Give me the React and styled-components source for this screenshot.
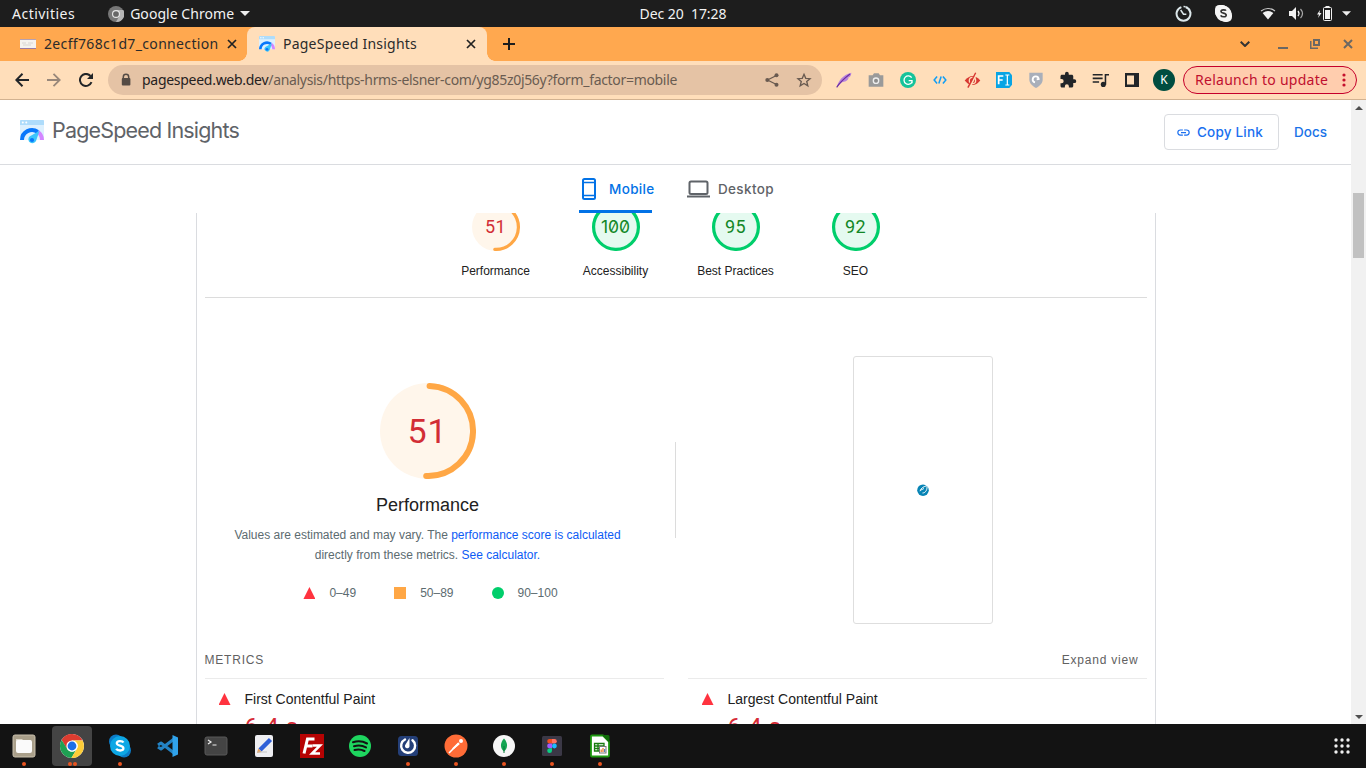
import React from "react";
import styled, { createGlobalStyle, css } from "styled-components";

const ui = '"Noto Sans", "Open Sans", sans-serif';
const product = 'Inter, "Liberation Sans", sans-serif';
const body = '"Liberation Sans", Arial, sans-serif';
const numeric = 'Roboto, "Liberation Sans", sans-serif';

const Global = createGlobalStyle`
  * { box-sizing: border-box; }
  html, body { margin: 0; padding: 0; overflow: hidden; background: #131313; }
  svg { display: block; flex: none; }
`;

const Screen = styled.div`
  width: 1366px;
  height: 768px;
  display: flex;
  flex-direction: column;
  overflow: hidden;
  font-family: ${ui};
`;

const Label = styled.span`
  white-space: pre;
  font-size: ${(p) => p.$size || 14}px;
  letter-spacing: ${(p) => p.$track || 0}px;
  color: ${(p) => p.$color || "inherit"};
`;

/* ---------- system bar ---------- */
const SystemBar = styled.header`
  height: 27px;
  flex: none;
  background: #1d1d1d;
  color: #f2f2f2;
  display: grid;
  grid-template-columns: 1fr auto 1fr;
  align-items: center;
  line-height: 26px;
`;
const SystemMenus = styled.div`
  display: flex;
  align-items: center;
  padding-left: 12px;
`;
const AppMenu = styled.div`
  display: flex;
  align-items: center;
  gap: 6px;
  margin-left: 33px;
`;
const Tray = styled.div`
  display: flex;
  align-items: center;
  justify-content: flex-end;
  padding-right: 15px;
`;
const TraySlot = styled.div`
  width: ${(p) => p.$w}px;
  margin-left: ${(p) => p.$before || 0}px;
  display: flex;
  justify-content: center;
`;

/* ---------- browser chrome ---------- */
const TabStrip = styled.div`
  height: 34px;
  flex: none;
  background: #ffa84f;
  display: flex;
  color: #2b2b2b;
`;
const Tab = styled.div`
  width: ${(p) => p.$w}px;
  display: flex;
  align-items: center;
  padding: 0 ${(p) => p.$right}px 0 ${(p) => p.$left}px;
  position: relative;
  ${(p) =>
    p.$active &&
    css`
      background: #ffdeba;
      border-radius: 8px 8px 0 0;
      &::before,
      &::after {
        content: "";
        position: absolute;
        bottom: 0;
        width: 8px;
        height: 8px;
      }
      &::before {
        left: -8px;
        background: radial-gradient(circle at 0 0, transparent 7.5px, #ffdeba 8px);
      }
      &::after {
        right: -8px;
        background: radial-gradient(circle at 100% 0, transparent 7.5px, #ffdeba 8px);
      }
    `}
`;
const TabTitle = styled(Label)`
  margin-left: 8px;
  flex: 1;
  line-height: 34px;
`;
const NewTab = styled.div`
  width: 44px;
  display: grid;
  place-items: center;
`;
const WindowControls = styled.div`
  margin-left: auto;
  display: flex;
  align-items: center;
  padding-right: 2px;
`;
const Toolbar = styled.div`
  height: 39px;
  flex: none;
  background: #ffdeba;
  border-bottom: 1px solid #d2b291;
  display: flex;
  align-items: center;
  padding: 0 9px 0 6px;
`;
const ToolCell = styled.div`
  width: 32px;
  height: 30px;
  display: grid;
  place-items: center;
`;
const AddressBar = styled.div`
  width: 714px;
  height: 30px;
  border-radius: 15px;
  background: #e5c3a5;
  margin: 0 6px 0 6px;
  padding: 0 2px 0 12px;
  display: flex;
  align-items: center;
`;
const Url = styled.div`
  flex: 1;
  margin-left: 10px;
  padding-bottom: 2px;
  line-height: 28px;
`;
const Avatar = styled.div`
  width: 22px;
  height: 22px;
  border-radius: 50%;
  background: #004d40;
  color: #fff;
  font: 12px/22px ${ui};
  text-align: center;
`;
const Relaunch = styled.div`
  width: 174px;
  height: 28px;
  margin-left: 3px;
  border: 1px solid #c5002b;
  border-radius: 14px;
  background: #ffcdae;
  color: #c00f2e;
  display: flex;
  align-items: center;
  justify-content: space-between;
  padding: 0 10px 0 11px;
  line-height: 26px;
`;

/* ---------- page ---------- */
const Viewport = styled.div`
  height: 624px;
  flex: none;
  display: flex;
  background: #fff;
`;
const Page = styled.main`
  width: 1351px;
  display: flex;
  flex-direction: column;
  overflow: hidden;
`;
const Scrollbar = styled.div`
  width: 15px;
  background: #f1f1f1;
  display: flex;
  flex-direction: column;
  align-items: center;
  padding: 6px 0 5px;
`;
const Thumb = styled.div`
  width: 11px;
  height: 65px;
  margin: 83px 0 auto;
  background: #c1c1c1;
`;
const Arrow = styled.div`
  border: 4px solid transparent;
  ${(p) => (p.$up ? "border-top: 0; border-bottom-color: #505050;" : "border-bottom: 0; border-top-color: #505050;")}
`;
const PageHeader = styled.div`
  height: 65px;
  flex: none;
  border-bottom: 1px solid #dadce0;
  display: flex;
  align-items: center;
  padding: 0 23px 0 20px;
  font-family: ${product};
`;
const Brand = styled.div`
  display: flex;
  align-items: center;
  gap: 8px;
  flex: 1;
  padding-bottom: 1px;
`;
const BrandName = styled(Label)`
  padding-bottom: 3px;
`;
const CopyButton = styled.div`
  width: 115px;
  height: 36px;
  border: 1px solid #dadce0;
  border-radius: 4px;
  display: flex;
  align-items: center;
  padding-left: 11px;
  gap: 6px;
  color: #1a6ff0;
  font-weight: 500;
`;
const DocsLink = styled.div`
  display: flex;
  margin-left: 15px;
  width: 34px;
  color: #1a73e8;
  font-weight: 500;
`;
const FormFactors = styled.nav`
  height: 48px;
  flex: none;
  display: flex;
  justify-content: center;
  gap: 34px;
  padding-left: 3px;
  font-family: ${product};
`;
const FormFactor = styled.div`
  width: ${(p) => p.$w}px;
  display: flex;
  align-items: center;
  gap: ${(p) => p.$gap}px;
  font-weight: 500;
  color: ${(p) => (p.$active ? "#0272e6" : "#5f6368")};
  border-bottom: 1px solid transparent;
  background: ${(p) => (p.$active ? "linear-gradient(#0272e6,#0272e6) 0 100%/73px 3px no-repeat border-box" : "none")};
`;
const Clip = styled.div`
  flex: 1;
  overflow: hidden;
`;
const Report = styled.div`
  width: 960px;
  height: 560px;
  margin: -10px auto 0;
  padding: 0 8px;
  border: 1px solid #dadce0;
  border-width: 0 1px;
  font-family: ${body};
  color: #212121;
`;
const ScoreRow = styled.div`
  height: 95px;
  display: flex;
  justify-content: center;
  border-bottom: 1px solid #dcdcdc;
`;
const ScoreItem = styled.div`
  width: 120px;
  display: flex;
  flex-direction: column;
  align-items: center;
  gap: 10px;
  font-size: 12px;
  line-height: 20px;
`;
const GaugeBox = styled.div`
  display: grid;
  width: ${(p) => p.$d}px;
  height: ${(p) => p.$d}px;
  > * { grid-area: 1 / 1; }
`;
const GaugeValue = styled.div`
  place-self: center;
  font-family: ${(p) => (p.$slashed ? product : numeric)};
  font-feature-settings: "zero" ${(p) => (p.$slashed ? 1 : 0)};
  font-size: ${(p) => p.$size}px;
  line-height: 1;
  letter-spacing: ${(p) => p.$track}px;
  color: ${(p) => p.$color};
`;
const Summary = styled.section`
  display: grid;
  grid-template-columns: 446px 1px 447px;
  column-gap: 24px;
  height: 352px;
`;
const Category = styled.div`
  display: flex;
  flex-direction: column;
  align-items: center;
  padding-top: 85px;
`;
const CategoryTitle = styled.h2`
  margin: 16px 0 10px;
  font-size: 18px;
  line-height: 20px;
  font-weight: 400;
`;
const Description = styled.p`
  margin: 0;
  width: 400px;
  text-align: center;
  font-size: 12px;
  line-height: 20px;
  color: #5c6b70;
  span { color: #0d5bf5; }
`;
const Legend = styled.div`
  margin-top: 18px;
  padding-left: 6px;
  display: flex;
  gap: 38px;
  font-size: 12px;
  line-height: 20px;
  color: #5c6b70;
`;
const LegendItem = styled.div`
  display: flex;
  align-items: center;
  gap: 14px;
`;
const Mark = styled.i`
  width: 12px;
  height: 12px;
  background: ${(p) => ({ fail: "#ff333f", average: "#ffa745", pass: "#00ce6b" })[p.$kind]};
  border-radius: ${(p) => (p.$kind === "pass" ? "50%" : 0)};
  clip-path: ${(p) => (p.$kind === "fail" ? "polygon(50% 0, 100% 100%, 0 100%)" : "none")};
`;
const Rule = styled.div`
  height: 96px;
  margin-top: 144px;
  background: #dcdcdc;
`;
const Thumbnail = styled.div`
  width: 140px;
  height: 268px;
  margin: 58px 0 0 153px;
  border: 1px solid #dedede;
  border-radius: 3px;
  display: grid;
  place-items: center;
`;
const MetricsHeader = styled.div`
  display: flex;
  justify-content: space-between;
  height: 28px;
  padding-right: 8px;
  font-size: 12px;
  line-height: 20px;
  letter-spacing: 0.8px;
  color: #616161;
`;
const MetricGrid = styled.div`
  display: grid;
  grid-template-columns: 459px 459px;
  column-gap: 24px;
`;
const Metric = styled.div`
  border-top: 1px solid #ebebeb;
  padding: 10px 0 0 14px;
  display: grid;
  grid-template-columns: 26px 1fr;
  align-items: center;
  font-size: 14px;
  line-height: 20px;
`;
const MetricValue = styled.div`
  grid-column: 2;
  font: 24px/36px ${numeric};
  letter-spacing: 0.5px;
  color: #d62a35;
`;

/* ---------- dock ---------- */
const Dock = styled.footer`
  height: 44px;
  flex: none;
  background: #131313;
  display: flex;
  align-items: center;
  padding-right: 16px;
`;
const DockItem = styled.div`
  width: 40px;
  height: 40px;
  margin: 0 4px;
  border-radius: 4px;
  background: ${(p) => (p.$active ? "#444" : "transparent")};
  display: flex;
  flex-direction: column;
  align-items: center;
  padding-top: 8px;
`;
const Dots = styled.div`
  display: flex;
  gap: 1px;
  margin-top: 4px;
  i {
    width: 4px;
    height: 4px;
    border-radius: 50%;
    background: #e95420;
  }
`;
const DockSpacer = styled.div`
  flex: 1;
`;

const Icon = ({ s = 16, w, h, box = 24, children, ...rest }) => (
  <svg width={w || s} height={h || s} viewBox={typeof box === "string" ? box : `0 0 ${box} ${box}`} fill="none" {...rest}>
    {children}
  </svg>
);

const Cross = ({ color = "#222", s = 10, sw = 1.7 }) => (
  <Icon s={s} box={10} stroke={color} strokeWidth={sw}><path d="M1 1l8 8M9 1l-8 8" /></Icon>
);

const SpeedLogo = ({ s }) => (
  <Icon s={s} box={24}>
    <path d="M1 0h22a1 1 0 0 1 1 1v19H0V1a1 1 0 0 1 1-1z" fill="#dcf0fe" />
    <path d="M1 0h22a1 1 0 0 1 1 1v4H0V1a1 1 0 0 1 1-1z" fill="#aedcfb" />
    <circle cx="2.8" cy="2.6" r="1" fill="#fff" /><circle cx="6.3" cy="2.6" r="1" fill="#fff" />
    <path d="M2 20a10 10 0 0 1 15.8-8.1" stroke="#0877fb" strokeWidth="4" />
    <path d="M17.8 11.9A10 10 0 0 1 22 20" stroke="#d386ff" strokeWidth="4" />
    <path d="M19.5 10.8L16 21a4 4 0 1 1-6.5-4.5z" fill="#3cc5fb" />
    <circle cx="12" cy="20" r="2.1" fill="#0877fb" />
  </Icon>
);

function Gauge({ d, stroke, score, size, track, pass, slashed }) {
  const r = (d - stroke) / 2;
  const c = 2 * Math.PI * r;
  const part = score === 51 ? 0.5 : 1;
  return (
    <GaugeBox $d={d}>
      <svg width={d} height={d}>
        <circle cx={d / 2} cy={d / 2} r={d / 2} fill={pass ? "#e5faf0" : "#fff6eb"} />
        <circle
          cx={d / 2} cy={d / 2} r={r} fill="none" stroke={pass ? "#00ce6b" : "#ffa745"}
          strokeWidth={stroke} strokeLinecap="round" strokeDasharray={`${part * c} ${c}`}
          transform={`rotate(-88 ${d / 2} ${d / 2})`}
        />
      </svg>
      <GaugeValue $size={size} $track={track} $slashed={slashed} $color={pass ? "#128726" : "#d22d35"}>{score}</GaugeValue>
    </GaugeBox>
  );
}

const extensions = [
  <Icon s={16}><path d="M1 23C3 14 10 4 23 1c0 5-3 7-6 8l2 .5c-2 4-6 5.500-10 6z" fill="#b884dd" /><path d="M1 23C7 14 13 9 21 3" stroke="#6c2d9e" strokeWidth="1.600" /></Icon>,
  <Icon s={16}><path d="M1 5h6l2-3h7l2 3h5v17H1z" fill="#9a9a9a" /><circle cx="12" cy="13" r="5" fill="#eee" /><circle cx="12" cy="13" r="3" fill="#8d8d8d" /></Icon>,
  <Icon s={16}><circle cx="12" cy="12" r="12" fill="#15c39a" /><path d="M17.5 8.5A6.3 6.3 0 1 0 18 15v-2h-5M18 12v5" stroke="#fff" strokeWidth="2" /></Icon>,
  <Icon s={14} stroke="#109df5" strokeWidth="2.600"><path d="M7 6l-5 6 5 6M17 6l5 6-5 6M14 6l-4 12" /></Icon>,
  <Icon s={17}><path d="M1 12Q12-1 23 12 12 25 1 12z" fill="#d73832" /><circle cx="12" cy="12" r="4.500" stroke="#ffdeba" strokeWidth="1.800" /><path d="M7.500 23L18.500 1" stroke="#ffdeba" strokeWidth="2.600" /><path d="M5.500 22L16.500 1" stroke="#d73832" strokeWidth="2" /></Icon>,
  <Icon s={16}><path d="M0 0h20l4 5v14l-4 5H0z" fill="#08a4e4" /><path d="M4 18.500V6h7M4 12h6" stroke="#fff" strokeWidth="2.600" /><path d="M14 4.500h6M14 19.500h6M17 4.500v15" stroke="#fff" strokeWidth="1.800" /></Icon>,
  <Icon s={16}><path d="M2 1h20v10c0 6-4 10-10 13C6 21 2 17 2 11z" fill="#a9afba" /><path d="M10.500 15.500a4.500 4.500 0 1 1 5.500-5l-3 .5" stroke="#fff" strokeWidth="2.800" /></Icon>,
  <Icon s={18}><path fill="#222528" d="M20.5 11H19V7c0-1.1-.9-2-2-2h-4V3.500a2.500 2.500 0 0 0-5 0V5H4c-1.100 0-2 .9-2 2v3.800h1.500a2.700 2.700 0 0 1 0 5.400H2V20c0 1.100.9 2 2 2h3.800v-1.500a2.700 2.700 0 0 1 5.400 0V22H17c1.100 0 2-.9 2-2v-4h1.500a2.500 2.500 0 0 0 0-5z" /></Icon>,
  <Icon s={17}><path d="M1 4h14M1 9h14M1 14h9M19 18V4h5" stroke="#222528" strokeWidth="2.2" /><circle cx="16" cy="17.500" r="3.600" fill="#222528" /></Icon>,
  <Icon s={14} box={14}><path d="M0 0h14v14H0zM2 2.500v9h7v-9z" fill="#222528" fillRule="evenodd" /></Icon>,
  <Avatar>K</Avatar>,
];

const dock = [
  { dots: 1, art: <><rect x="1" y="1" width="22" height="22" rx="2" fill="#a99f8a" stroke="#c9c0ac" /><path d="M4 7V5h6l1 1h8v3H4z" fill="#ded8ca" /><rect x="4" y="6" width="16" height="13" rx="2" fill="#fafafa" /></> },
  { dots: 2, active: true, art: <><circle cx="12" cy="12" r="12" fill="#fff" /><path d="M12 6.500h10.600A12 12 0 0 0 1.600 6L7 15z" fill="#dc3c30" /><path d="M1.600 6A12 12 0 0 0 11.400 24l5.500-9.300A5.500 5.500 0 0 1 7 14.500z" fill="#1fa053" /><path d="M11.400 24A12 12 0 0 0 22.600 6.500H12a5.500 5.500 0 0 1 4.800 8.500z" fill="#fdcd38" /><circle cx="12" cy="12" r="5.600" fill="#fff" /><circle cx="12" cy="12" r="4.400" fill="#1d6fe8" /></> },
  { dots: 1, art: <><circle cx="8" cy="7.500" r="7" fill="#0c7cc8" /><circle cx="16" cy="16.500" r="7" fill="#0c7cc8" /><circle cx="12" cy="12" r="10" fill="#0da7e5" /><path d="M15.500 8.500c-1-1.700-6.700-2-6.700.8 0 3 6.600 1.800 6.600 5 0 3-6 2.700-7.200.5" stroke="#fff" strokeWidth="2.300" /></> },
  { art: <><path d="M18 5L5 15l-3-2M18 19L5 9l-3 2" stroke="#2383c5" strokeWidth="3" strokeLinejoin="round" /><path d="M16.500 1L22 3.500v17L16.500 23z" fill="#30a3ec" /></> },
  { art: <><rect x="1" y="3" width="22" height="18" rx="2" fill="#444" stroke="#595959" /><path d="M4 6l3 2-3 2M8.500 11h4" stroke="#eee" strokeWidth="1.200" /></> },
  { art: <><rect x="3" y="1" width="18" height="22" rx="2" fill="#eeeef2" /><path d="M8 16L18.500 5.500" stroke="#2e5fd7" strokeWidth="4.500" /><path d="M5 19l1.200-4.500L9.500 18z" fill="#e9a35b" /><path d="M5 18h10" stroke="#bbb" strokeWidth=".8" /></> },
  { art: <><rect x="0" y="0" width="24" height="24" fill="#b60303" /><path d="M4 19.500L7.500 5h7M6 12h6.500" stroke="#fff" strokeWidth="3" /><path d="M12.500 11.500h7.500l-8 8h8" stroke="#fff" strokeWidth="2.500" /></> },
  { art: <><circle cx="12" cy="12" r="11" fill="#1ed65f" /><path d="M5 8.300c5-1.600 10-1 14 1.200M6 12.300c4.500-1.300 8.500-.8 12 1.100M6.500 16c4-1 7-.6 10 1" stroke="#131313" strokeWidth="2" strokeLinecap="round" /></> },
  { dots: 1, art: <><rect x="2" y="2" width="20" height="20" rx="3.500" fill="#243f78" /><path d="M16.500 6.300a7 7 0 1 1-7.500-.8" stroke="#fff" strokeWidth="2.400" strokeLinecap="round" /><path d="M13.500 4v8.500a2.300 2.300 0 1 1-4-2z" fill="#fff" /></> },
  { dots: 1, art: <><circle cx="12" cy="12" r="11.500" fill="#ff6c37" /><path d="M5 19L15 9" stroke="#fff" strokeWidth="1.600" /><path d="M8 14.500l6-6 1.700 1.700-6 5z" fill="#fff" /><circle cx="17" cy="7" r="2" fill="#fff" /></> },
  { dots: 1, art: <><circle cx="12" cy="12" r="11" fill="#f7f7f7" /><path d="M12 4.500c4.500 5 3.600 10 0 13-3.600-3-4.500-8 0-13z" fill="#13a552" /><path d="M12 12v7" stroke="#0d783b" /></> },
  { dots: 1, art: <><rect x="2" y="2" width="20" height="20" rx="1.500" fill="#3b3846" /><path d="M9.500 5H12v4.600H9.500a2.300 2.300 0 0 1 0-4.600z" fill="#f24e1e" /><path d="M12 5h2.500a2.300 2.300 0 0 1 0 4.600H12z" fill="#ff7262" /><path d="M9.500 9.600H12v4.700H9.500a2.300 2.300 0 0 1 0-4.700z" fill="#a259ff" /><circle cx="14.400" cy="12" r="2.400" fill="#1abcfe" /><path d="M9.500 14.300H12v2.400a2.400 2.400 0 1 1-2.500-2.400z" fill="#0acf83" /></> },
  { dots: 1, art: <><path d="M4 1.500h11l6 6v14q0 1-1 1H4q-1 0-1-1v-19q0-1 1-1z" fill="#fff" stroke="#1e9a11" strokeWidth="1.800" /><path d="M14 1h6q1.500 0 1.500 1.500V9z" fill="#116b0a" /><path d="M6.500 9.500H16V17H6.500zM6.500 12H16M6.500 14.500h6M10 9.500V17" stroke="#187c10" strokeWidth="1.300" /><rect x="11.500" y="12.500" width="6.500" height="6.500" fill="#fff" stroke="#777" /><path d="M13.200 18v-2.500M15 18v-4" stroke="#e87924" strokeWidth="1.200" /><path d="M16.700 18v-3" stroke="#3465a4" strokeWidth="1" /></> },
];

export default function App() {
  return (
    <Screen>
      <Global />
      <SystemBar>
        <SystemMenus>
          <Label $size={14} $track={0.48}>Activities</Label>
          <AppMenu>
            <Icon s={16}><circle cx="12" cy="12" r="12" fill="#777" /><path d="M12 6h11A12 12 0 0 1 12 24l5-9z" fill="#b5b5b5" /><circle cx="12" cy="12" r="6" fill="#e7e7e7" /><circle cx="12" cy="12" r="4.300" fill="#666" /></Icon>
            <Label $size={14} $track={0.05}>Google Chrome</Label>
            <Icon w={10} h={5} box="0 0 10 5"><path d="M0 0h10L5 5z" fill="#eee" /></Icon>
          </AppMenu>
        </SystemMenus>
        <Label $size={14} $track={-0.05}>Dec 20  17:28</Label>
        <Tray>
          <TraySlot $w={40}><Icon s={17}><path d="M15 3a9.800 9.800 0 1 1-6 0" stroke="#dce7ea" strokeWidth="2.800" /><path d="M12 2a10 10 0 0 1 10 10" stroke="#dce7ea" strokeWidth="2" strokeDasharray="3 1" /><path d="M8 7l4 6h4" stroke="#dce7ea" strokeWidth="2.200" /></Icon></TraySlot>
          <TraySlot $w={40}><Icon s={17}><rect width="17" height="17" rx="6" fill="#f5f5f5" /><rect x="7" y="7" width="17" height="17" rx="7" fill="#f5f5f5" /><circle cx="12" cy="12" r="11" fill="#f5f5f5" /><path d="M15.500 8c-1-1.600-7-2-7 1 0 3.500 7.300 1.500 7.300 5.500 0 3-6.500 2.500-7.800 0" stroke="#333" strokeWidth="2.400" /></Icon></TraySlot>
          <TraySlot $w={40} $before={5}><Icon w={16} h={13} box="0 0 16 13"><path d="M1 4Q8-1 15 4" stroke="#ccc" strokeWidth="1.200" /><path d="M2.600 6Q8 2 13.400 6L8 12.500z" fill="#f2f2f2" /></Icon></TraySlot>
          <TraySlot $w={14} $before={1}><Icon w={15} h={13} box="0 0 15 13"><path d="M0 4h3l4-4v13L3 9H0z" fill="#f2f2f2" /><path d="M9 4q2 2.500 0 5" stroke="#f2f2f2" strokeWidth="1.300" /><path d="M11.500 2q4 4.500 0 9" stroke="#aaa" strokeWidth="1.200" /></Icon></TraySlot>
          <TraySlot $w={14} $before={14}><Icon w={15} h={15} box="0 0 15 15"><path d="M3 4L0 8.500h2L1 12l3.500-5h-2z" fill="#f2f2f2" /><rect x="6.500" y="1.500" width="8" height="13" rx="1" stroke="#f2f2f2" /><path d="M8.500 0h4v1.500h-4z" fill="#f2f2f2" /><path d="M8 4h5v9H8z" fill="#f2f2f2" /></Icon></TraySlot>
          <TraySlot $w={10} $before={10}><Icon w={9} h={5} box="0 0 10 5"><path d="M0 0h10L5 5z" fill="#eee" /></Icon></TraySlot>
        </Tray>
      </SystemBar>

      <TabStrip>
        <Tab $w={247} $left={20} $right={10}>
          <Icon w={16} h={10} box="0 0 16 10"><path d="M0 0h16v10H0z" fill="#f5f2ef" /><path d="M0 .5h16" stroke="#b6a1b2" /><path d="M0 9.500h16" stroke="#9b7ba5" /><path d="M2 4h4M8 4h5M3 6h8" stroke="#d8d5d2" /></Icon>
          <TabTitle $size={14} $track={0.34}>2ecff768c1d7_connection</TabTitle>
          <Cross s={10} />
        </Tab>
        <Tab $w={240} $left={12} $right={11} $active>
          <SpeedLogo s={16} />
          <TabTitle $size={14} $track={0.23}>PageSpeed Insights</TabTitle>
          <Cross s={10} />
        </Tab>
        <NewTab><Icon s={12} box={12} stroke="#1d1d1d" strokeWidth="2"><path d="M6 0v12M0 6h12" /></Icon></NewTab>
        <WindowControls>
          <TraySlot $w={32}><Icon w={10} h={6} box="0 0 10 6" stroke="#333" strokeWidth="2"><path d="M.7.700L5 5 9.300.7" /></Icon></TraySlot>
          <TraySlot $w={32} $before={6}><Icon w={10} h={10} box={10}><path d="M0 8h10v2H0z" fill="#6b6763" /></Icon></TraySlot>
          <TraySlot $w={32}><Icon s={10} box={10} stroke="#6b6763"><path d="M4 1h5v5H4z" strokeWidth="2" /><path d="M.75 2v7.250H8" strokeWidth="1.500" /></Icon></TraySlot>
          <TraySlot $w={32} $before={1}><Cross color="#6b6763" s={10} sw={2} /></TraySlot>
        </WindowControls>
      </TabStrip>

      <Toolbar>
        <ToolCell><Icon s={14} box={14} stroke="#222528" strokeWidth="2"><path d="M14 7H1.500M7.500.8L1.300 7l6.200 6.200" /></Icon></ToolCell>
        <ToolCell><Icon s={14} box={14} stroke="#98877a" strokeWidth="1.800"><path d="M0 7h12.500M6.500.8L12.700 7l-6.200 6.200" /></Icon></ToolCell>
        <ToolCell><Icon s={14} box={14}><path d="M12.500 9.200A6 6 0 1 1 11.500 3" stroke="#222528" strokeWidth="2" /><path d="M14 0v6H8z" fill="#222528" /></Icon></ToolCell>
        <AddressBar>
          <Icon w={12} h={14} box="0 0 12 14"><path d="M3.300 6V4a2.700 2.700 0 0 1 5.400 0v2" stroke="#554b44" strokeWidth="1.500" /><rect x="1.800" y="5" width="8.600" height="7.500" rx="1" fill="#554b44" /></Icon>
          <Url>
            <Label $size={14} $track={-0.28} $color="#26211e">pagespeed.web.dev</Label>
            <Label $size={14} $track={-0.32} $color="#6a5c51">/analysis/https-hrms-elsner-com/yg85z0j56y?form_factor=mobile</Label>
          </Url>
          <ToolCell><Icon s={14} box={14}><path d="M11.500 2.500L2.500 7l9 4.500" stroke="#695a50" strokeWidth="1.300" /><circle cx="11.500" cy="2.300" r="2" fill="#695a50" /><circle cx="2.300" cy="7" r="2" fill="#695a50" /><circle cx="11.500" cy="11.700" r="2" fill="#695a50" /></Icon></ToolCell>
          <ToolCell><Icon s={16} stroke="#695a50" strokeWidth="2"><path d="M12 3.500l2.600 6 6.500.5-5 4.300 1.600 6.400-5.700-3.500-5.700 3.500 1.600-6.400-5-4.300 6.500-.5z" /></Icon></ToolCell>
        </AddressBar>
        {extensions.map((icon, i) => <ToolCell key={i}>{icon}</ToolCell>)}
        <Relaunch>
          <Label $size={14} $track={0.28}>Relaunch to update</Label>
          <Icon w={4} h={14} box="0 0 4 14"><g fill="#c5102d"><circle cx="2" cy="2" r="1.600" /><circle cx="2" cy="7" r="1.600" /><circle cx="2" cy="12" r="1.600" /></g></Icon>
        </Relaunch>
      </Toolbar>

      <Viewport>
        <Page>
          <PageHeader>
            <Brand>
              <SpeedLogo s={24} />
              <BrandName $size={21.5} $track={-0.83} $color="#5f6368">PageSpeed Insights</BrandName>
            </Brand>
            <CopyButton>
              <Icon s={15}><path fill="#1a6ff0" d="M3.900 12a3.100 3.100 0 0 1 3.100-3.100h4V7H7a5 5 0 0 0 0 10h4v-1.900H7A3.100 3.100 0 0 1 3.900 12zM8 13h8v-2H8zm9-6h-4v1.900h4a3.100 3.100 0 0 1 0 6.200h-4V17h4a5 5 0 0 0 0-10z" /></Icon>
              <Label $size={13.5} $track={0.2}>Copy Link</Label>
            </CopyButton>
            <DocsLink><Label $size={13.5} $track={0}>Docs</Label></DocsLink>
          </PageHeader>
          <FormFactors>
            <FormFactor $active $w={74} $gap={11}>
              <Icon w={19} h={24} box="0 0 19 24"><rect x="4" y="2" width="12" height="20" rx="1.500" stroke="#0272e6" strokeWidth="2" /><path d="M4 5.500h12M4 18.500h12" stroke="#0272e6" strokeWidth="1.600" /></Icon>
              <Label $size={13.5} $track={0.35}>Mobile</Label>
            </FormFactor>
            <FormFactor $w={88} $gap={8}>
              <Icon w={23} h={18} box="0 0 23 18"><rect x="2.500" y="1.500" width="18" height="12.500" rx="1.500" stroke="#5f6368" strokeWidth="2" /><path d="M0 16.500h23" stroke="#5f6368" strokeWidth="2" /></Icon>
              <Label $size={13.5} $track={0.35}>Desktop</Label>
            </FormFactor>
          </FormFactors>
          <Clip>
            <Report>
              <ScoreRow>
                <ScoreItem><Gauge d={48} stroke={3.2} score={51} size={18} track={0.5} />Performance</ScoreItem>
                <ScoreItem><Gauge d={48} stroke={3.2} score={100} size={17.5} track={0} pass slashed />Accessibility</ScoreItem>
                <ScoreItem><Gauge d={48} stroke={3.2} score={95} size={18} track={0.5} pass />Best Practices</ScoreItem>
                <ScoreItem><Gauge d={48} stroke={3.2} score={92} size={18} track={0.5} pass />SEO</ScoreItem>
              </ScoreRow>
              <Summary>
                <Category>
                  <Gauge d={96} stroke={6} score={51} size={34} track={1} />
                  <CategoryTitle>Performance</CategoryTitle>
                  <Description>
                    Values are estimated and may vary. The <span>performance score is calculated</span><br />
                    directly from these metrics. <span>See calculator.</span>
                  </Description>
                  <Legend>
                    <LegendItem><Mark $kind="fail" />0–49</LegendItem>
                    <LegendItem><Mark $kind="average" />50–89</LegendItem>
                    <LegendItem><Mark $kind="pass" />90–100</LegendItem>
                  </Legend>
                </Category>
                <Rule />
                <Thumbnail>
                  <Icon s={12} box={12}><circle cx="6" cy="6.200" r="5.800" fill="#0784b5" /><path d="M3 7.200C4 3.500 7 2.800 10 1.500 10.500 5 9 9 5.500 9" stroke="#fff" strokeWidth="1" /><path d="M4 6l3-1.500" stroke="#e4f5fa" /></Icon>
                </Thumbnail>
              </Summary>
              <MetricsHeader><span>METRICS</span><span>Expand view</span></MetricsHeader>
              <MetricGrid>
                <Metric><Mark $kind="fail" />First Contentful Paint<MetricValue>6.4 s</MetricValue></Metric>
                <Metric><Mark $kind="fail" />Largest Contentful Paint<MetricValue>6.4 s</MetricValue></Metric>
              </MetricGrid>
            </Report>
          </Clip>
        </Page>
        <Scrollbar><Arrow $up /><Thumb /><Arrow /></Scrollbar>
      </Viewport>

      <Dock>
        {dock.map((app, i) => (
          <DockItem key={i} $active={app.active}>
            <Icon s={24}>{app.art}</Icon>
            <Dots>{Array.from({ length: app.dots || 0 }, (_, n) => <i key={n} />)}</Dots>
          </DockItem>
        ))}
        <DockSpacer />
        <Icon s={16} box={16}>
          {[2, 8, 14].map((y) => [2, 8, 14].map((x) => <circle key={`${x}-${y}`} cx={x} cy={y} r="1.700" fill="#f0f0f0" />))}
        </Icon>
      </Dock>
    </Screen>
  );
}
